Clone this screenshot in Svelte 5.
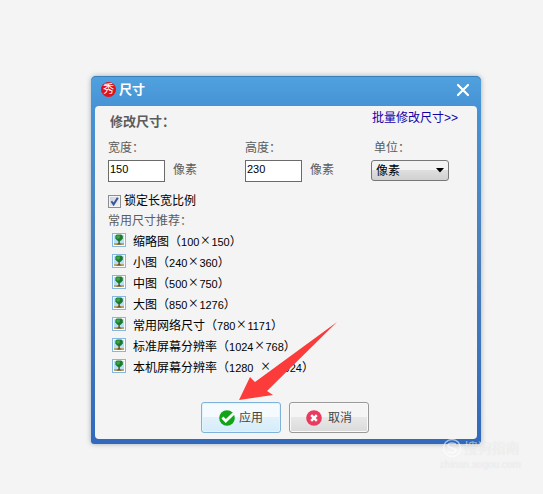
<script lang="ts">
  type Preset = {
    name: string;
    width: number;
    height: number;
    spaced?: boolean;
  };

  const presets: Preset[] = [
    { name: '缩略图', width: 100, height: 150 },
    { name: '小图', width: 240, height: 360 },
    { name: '中图', width: 500, height: 750 },
    { name: '大图', width: 850, height: 1276 },
    { name: '常用网络尺寸', width: 780, height: 1171 },
    { name: '标准屏幕分辨率', width: 1024, height: 768 },
    { name: '本机屏幕分辨率', width: 1280, height: 1024, spaced: true }
  ];

  let width = '150';
  let height = '230';
  let unit = '像素';
  let locked = true;
</script>

<main class="desktop">
  <section class="dialog" aria-labelledby="dialog-title">
    <header class="titlebar">
      <span class="logo">秀</span>
      <h1 id="dialog-title">尺寸</h1>
      <button class="close" type="button" aria-label="关闭">
        <svg viewBox="0 0 14 14" width="14" height="14">
          <path d="M2 2L12 12M12 2L2 12" stroke="#fff" stroke-width="2.2" stroke-linecap="round" />
        </svg>
      </button>
    </header>

    <form class="panel" on:submit|preventDefault>
      <div class="heading">
        <h2>修改尺寸：</h2>
        <a href="#batch">批量修改尺寸&gt;&gt;</a>
      </div>

      <div class="fields">
        <div class="field">
          <label for="width">宽度：</label>
          <div class="field__row">
            <input id="width" type="text" bind:value={width} />
            <span>像素</span>
          </div>
        </div>
        <div class="field">
          <label for="height">高度：</label>
          <div class="field__row">
            <input id="height" type="text" bind:value={height} />
            <span>像素</span>
          </div>
        </div>
        <div class="field field--unit">
          <label for="unit">单位：</label>
          <div class="select">
            <select id="unit" bind:value={unit}>
              <option>像素</option>
              <option>厘米</option>
            </select>
            <svg viewBox="0 0 8 5" width="8" height="5" aria-hidden="true">
              <path d="M0 0H8L4 4.6Z" fill="#000" />
            </svg>
          </div>
        </div>
      </div>

      <label class="lock">
        <span class="check">
          <input type="checkbox" bind:checked={locked} />
          {#if locked}
            <svg viewBox="0 0 13 13" width="13" height="13" aria-hidden="true">
              <path d="M3.4 6.2L5.6 9.4L9.8 2.8" fill="none" stroke="#3c5596" stroke-width="2" />
            </svg>
          {/if}
        </span>
        锁定长宽比例
      </label>

      <p class="caption">常用尺寸推荐：</p>
      <ul class="presets">
        {#each presets as preset}
          <li>
            <svg class="thumb" viewBox="0 0 14 14" width="14" height="14" aria-hidden="true">
              <rect x=".5" y=".5" width="13" height="13" fill="#f8fcff" stroke="#87b6de" />
              <rect x="2" y="2" width="10" height="8" fill="#b9defa" />
              <path d="M2 10H12V12H2Z" fill="#b7a768" />
              <path d="M6.4 7H7.8V10.2L10 11.6H4.2L6.4 10.2Z" fill="#69491e" />
              <path d="M4.6 1.6H9.4L10.8 3V5.2L9.4 7.2L7.2 8.4L4.8 7.2L3.4 5.2V3Z" fill="#1c7a2e" />
              <path d="M5 2.4H8L7.6 5.2L5.2 5.8L4.4 4.6V3Z" fill="#43a548" />
            </svg>
            <span>
              {preset.name}（<span class="number">{preset.width}</span><span class="times" class:times--spaced={preset.spaced}>×</span><span class="number">{preset.height}</span>）
            </span>
          </li>
        {/each}
      </ul>

      <footer class="actions">
        <button class="apply" type="submit">
          <svg viewBox="0 0 16 16" width="16" height="16" aria-hidden="true">
            <circle cx="8" cy="8" r="7.8" fill="#10a416" />
            <path d="M3.4 7.6L6.8 11L14.6 3.6" fill="none" stroke="#fff" stroke-width="2.8" />
          </svg>
          应用
        </button>
        <button class="cancel" type="button">
          <svg viewBox="0 0 16 16" width="16" height="16" aria-hidden="true">
            <circle cx="8" cy="8" r="7.8" fill="#e83b60" />
            <path d="M5.2 5.2L10.8 10.8M10.8 5.2L5.2 10.8" stroke="#fff" stroke-width="2.5" />
          </svg>
          取消
        </button>
      </footer>
    </form>

    <svg class="arrow" viewBox="0 0 99 80" width="99" height="80" aria-hidden="true">
      <path d="M98 1L28 70L34 74L0 79L11 56L16 61Z" fill="#fb3c3a" />
    </svg>

    <div class="watermark">
      <svg viewBox="0 0 20 20" width="20" height="20" aria-hidden="true">
        <circle cx="10" cy="10" r="8.5" fill="none" stroke="currentColor" stroke-width="1.4" />
        <path d="M14 6Q6 4 6 7.5Q6 9 10 10Q14 11 14 13Q12 16 5 14" fill="none" stroke="currentColor" stroke-width="1.8" />
      </svg>
      <div>
        <strong>搜狗指南</strong>
        <span>zhinan.sogou.com</span>
      </div>
    </div>
  </section>
</main>

<style>
  :global(body) {
    margin: 0;
    background: #f4f4f4;
  }

  .desktop {
    min-height: 100vh;
    box-sizing: border-box;
    padding: 76px 62px 0 91px;
    font-family: "Liberation Sans", "Noto Sans CJK SC", sans-serif;
    font-size: 12px;
    line-height: 20px;
    color: #000;
  }

  .dialog {
    position: relative;
    box-sizing: border-box;
    padding: 0 4px 5px;
    border-radius: 5px 5px 3px 3px;
    background: linear-gradient(#50a2df, #4793d5 30px, #4a7fba 50%, #3169bd);
    box-shadow: 0 0 5px rgb(60 80 100 / 45%), inset 0 1px #397fb9;
  }

  .titlebar {
    display: flex;
    align-items: center;
    gap: 3px;
    height: 27px;
    padding: 0 5px 3px 6px;
    color: #fff;
  }

  .logo {
    width: 15px;
    height: 15px;
    border-radius: 50%;
    background: #dc1420;
    font-size: 11px;
    line-height: 15px;
    text-align: center;
  }

  h1,
  h2 {
    margin: 0;
    font-size: 13px;
  }

  button {
    font: inherit;
  }

  .close {
    display: grid;
    margin-left: auto;
    padding: 2px;
    border: 0;
    background: none;
  }

  .panel {
    padding: 0 19px 6px 13px;
    border-radius: 4px;
    background: #f4f4f4;
    color: #5c5c5c;
  }

  .heading {
    display: flex;
    justify-content: space-between;
    height: 32px;
    padding-left: 2px;
  }

  h2 {
    line-height: 32px;
  }

  .heading a {
    line-height: 24px;
    color: #1200a8;
    text-decoration: none;
  }

  .fields {
    display: grid;
    grid-template-columns: 137fr 126fr 87fr;
  }

  .field label {
    display: block;
    margin-bottom: 2px;
  }

  .field__row {
    display: flex;
    gap: 8px;
  }

  .field__row input {
    box-sizing: border-box;
    width: 57px;
    height: 22px;
    padding: 0 1px 5px;
    border: 1px solid #6b6b6b;
    background: #fff;
    font-family: inherit;
    font-size: 11px;
    color: #000;
  }

  .field--unit label {
    padding-left: 3px;
  }

  .select {
    display: grid;
    width: 78px;
    align-items: center;
  }

  .select select,
  .select svg {
    grid-area: 1 / 1;
  }

  .select svg {
    margin-right: 5px;
    justify-self: end;
    pointer-events: none;
  }

  select {
    width: 100%;
    height: 21px;
    padding: 0 4px;
    border: 1px solid #777;
    border-radius: 3px;
    appearance: none;
    background: linear-gradient(#f3f3f3 45%, #dedede 50%, #d0d0d0);
    font: inherit;
    color: #000;
  }

  .lock {
    display: flex;
    align-items: center;
    gap: 3px;
    margin-top: 9px;
    color: #000;
  }

  .check {
    display: grid;
  }

  .check input,
  .check svg {
    grid-area: 1 / 1;
  }

  .check input {
    width: 13px;
    height: 13px;
    margin: 0;
    border: 1px solid #8b8d90;
    appearance: none;
    background: linear-gradient(135deg, #c9d0da, #f4f6f8);
    box-shadow: inset 0 0 0 1px #f4f4f4;
  }

  .check svg {
    pointer-events: none;
  }

  .caption {
    margin: 0;
  }

  .presets {
    margin: 0;
    padding: 0 0 0 4px;
    list-style: none;
    color: #000;
  }

  .presets li {
    display: flex;
    align-items: center;
    gap: 7px;
    height: 21px;
    white-space: nowrap;
  }

  .thumb {
    margin-bottom: 4px;
  }

  .number {
    font-size: 11px;
  }

  .times {
    display: inline-block;
    width: 12px;
    font-family: "Noto Sans", sans-serif;
    font-size: 16px;
    font-weight: 300;
    line-height: 12px;
    text-align: center;
  }

  .times--spaced {
    padding: 0 6px;
  }

  .actions {
    display: flex;
    justify-content: center;
    gap: 8px;
    padding: 24px 0 0 4px;
  }

  .actions button {
    display: flex;
    align-items: center;
    justify-content: center;
    gap: 4px;
    width: 80px;
    height: 31px;
    padding: 0;
    border-radius: 3px;
    color: #444;
  }

  .apply {
    border: 1px solid #7eb2d6;
    background: linear-gradient(#f4fafd 50%, #e2f2fb 50%, #d4ecfa);
    box-shadow: inset 0 0 0 1px #e2f5ff;
  }

  .actions .cancel {
    gap: 6px;
    border: 1px solid #999;
    background: linear-gradient(#f5f5f5 50%, #e8e8e8 50%, #dadada);
    box-shadow: inset 0 0 0 1px #fafafa;
  }

  .arrow {
    position: absolute;
    top: 245px;
    left: 148px;
    pointer-events: none;
  }

  .watermark {
    position: absolute;
    right: -40px;
    bottom: -28px;
    display: flex;
    gap: 2px;
    color: rgb(255 255 255 / 60%);
    text-shadow: 0 0 1px rgb(0 0 0 / 12%);
    pointer-events: none;
  }

  .watermark strong,
  .watermark span {
    display: block;
  }

  .watermark strong {
    font-size: 14px;
    font-weight: 400;
  }

  .watermark span {
    margin-left: -24px;
    font-size: 10px;
    line-height: 14px;
  }
</style>
